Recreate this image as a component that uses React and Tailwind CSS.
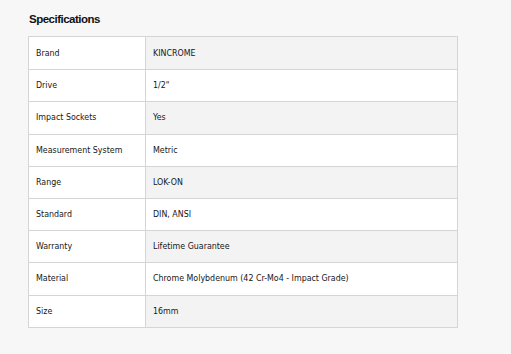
const specs = [
  ['Brand', 'KINCROME'],
  ['Drive', '1/2"'],
  ['Impact Sockets', 'Yes'],
  ['Measurement System', 'Metric'],
  ['Range', 'LOK-ON'],
  ['Standard', 'DIN, ANSI'],
  ['Warranty', 'Lifetime Guarantee'],
  ['Material', 'Chrome Molybdenum (42 Cr-Mo4 - Impact Grade)'],
  ['Size', '16mm'],
]

const font = { fontFamily: '"DejaVu Sans Condensed", "Liberation Sans", sans-serif' }

export default function App() {
  return (
    <div className="min-h-[354px] w-full bg-[#f7f7f7] pt-[11px] pl-[28px]" style={font}>
      <h2 className="pl-px font-['Liberation_Sans',sans-serif] text-[11.5px] font-bold leading-[16px] tracking-[-0.5px] text-[#111]">
        Specifications
      </h2>
      <div className="mt-[9px] w-[430px] border border-[#d5d5d5] bg-white">
        {specs.map(([label, value], i) => (
          <div
            key={label}
            className={`flex h-[32.2px] items-center text-[8.8px] text-[#161616] ${
              i > 0 ? 'border-t border-[#d5d5d5]' : ''
            }`}
          >
            <div className="flex h-full w-[117px] items-center border-r border-[#d5d5d5] bg-white pl-[7px]">
              {label}
            </div>
            <div
              className={`flex h-full flex-1 items-center pl-[7px] ${
                i % 2 === 0 ? 'bg-[#f3f3f3]' : 'bg-white'
              }`}
            >
              {value}
            </div>
          </div>
        ))}
      </div>
    </div>
  )
}
